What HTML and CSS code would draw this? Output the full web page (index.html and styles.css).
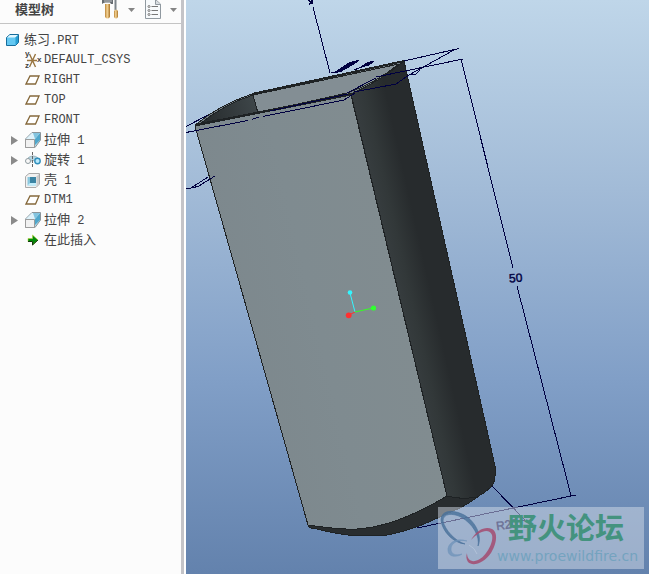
FILE: index.html
```html
<!DOCTYPE html>
<html lang="zh-CN">
<head>
<meta charset="utf-8">
<title>练习.PRT</title>
<link rel="stylesheet" href="styles.css">
</head>
<body>
<svg class="defs" aria-hidden="true">
  <defs>
    <linearGradient id="blue" x1="0" y1="0" x2="1" y2="1"><stop offset="0" stop-color="#d5eef9"/><stop offset="1" stop-color="#2f91bd"/></linearGradient>
    <linearGradient id="wood"><stop offset="0" stop-color="#b98336"/><stop offset=".45" stop-color="#f6d596"/><stop offset="1" stop-color="#a87228"/></linearGradient>
    <symbol id="part" viewBox="0 0 17 18">
      <path d="M1.500 6.500 5 3.500H13.500V11.500L10.500 14.500H1.500z" fill="#64c8f2" stroke="#176d9c"/>
      <path d="M2 6.500 5 4H13L10.500 6.500z" fill="#e1f7ff"/><path d="M10.500 6.500 13 4V11.500L10.500 14z" fill="#269ed2"/>
    </symbol>
    <symbol id="plane" viewBox="0 0 17 18"><path d="M5 5H14L10.500 13H1z" fill="#fff" stroke="#85683b" stroke-width="1.300"/></symbol>
    <symbol id="csys" viewBox="0 0 17 18">
      <path d="M4.500 3 10.500 16M10.500 3 4.500 16M2 9.500H12" fill="none" stroke="#987541" stroke-width="1.400"/>
      <g class="axis-name"><text x="0" y="5">y</text><text x="0" y="17">z</text><text x="12" y="11">x</text></g>
    </symbol>
    <symbol id="extrude" viewBox="0 0 17 18">
      <path d="M.5 8 7 1.500H15.500V9L10 16.500H.5z" fill="#b7deed" stroke="#8b959a"/>
      <path d="M7 2H15L10 8H1z" fill="#dff2fa"/><path d="M15 2V9L10 14V8z" fill="#4fa6ca"/><path d="M8 2H15L10 8z" fill="#83c4df"/>
      <path d="M.5 8.500H9.500V16.500H.5z" fill="#f1f1f1" stroke="#9c9c9c"/>
    </symbol>
    <symbol id="revolve" viewBox="0 0 17 18">
      <path d="M3 7Q5 5 8 5T13 7L10 10Q7 8 5 11z" fill="#b4d6e3" stroke="#9db4bf"/>
      <circle cx="3" cy="10" r="2.500" fill="#f8f8f8" stroke="#8f9ba0"/><circle cx="12.500" cy="10" r="2.700" fill="#b9e9fc" stroke="#318fbc" stroke-width="1.400"/>
      <path d="M7.500 1V17" stroke="#666" stroke-dasharray="3 1"/>
    </symbol>
    <symbol id="shell" viewBox="0 0 17 18">
      <path d="M.5 5.500 4 2.500H14.500V13L11 16.500H.5z" fill="#f1f1f1" stroke="#aaa"/><path d="M11.500 5.500 14 3V13L11.500 16z" fill="#ccc"/>
      <path d="M2.500 6H11V14.500H2.500z" fill="#8cc8de"/><path d="M5 6H11V12H5z" fill="#3b84a4"/><path d="M2.500 14.500 5 12H11V14.500z" fill="#c3edfb"/>
    </symbol>
    <symbol id="insert" viewBox="0 0 17 18"><path d="M3 7.500H7.500V4L13 9 7.500 14V10.500H3z" fill="#008b08" stroke="#b8d43c" stroke-width=".6"/><path d="M3 10.500H7.500V14L13 9" fill="none" stroke="#14380c"/></symbol>
    <symbol id="right" viewBox="0 0 8 9"><path d="M1 0 8 4.500 1 9z" fill="#8b8b8b"/></symbol>
    <symbol id="down" viewBox="0 0 7 4"><path d="M0 0H7L3.500 4z" fill="#858585"/></symbol>
  </defs>
</svg>

<div class="app">
  <aside class="panel">
    <header class="bar">
      <h1 class="title">模型树</h1>
      <div class="group">
        <button class="tool" type="button" aria-label="设置">
          <svg width="18" height="20" viewBox="0 0 18 20"><path d="M0 4V0H11V4H9L8 2.500H4Q2 2 0 4z" fill="#656b70"/><path d="M2 1H10" stroke="#bfc3c6"/><path d="M3 4H8V17Q5.500 20 3 17z" fill="url(#wood)"/><path d="M13.500 0V10" stroke="#7d858b" stroke-width="2"/><path d="M12 11Q14 8 16 11V17Q14 20 12 17z" fill="url(#wood)"/></svg>
        </button>
        <button class="tool" type="button" aria-label="设置菜单"><svg width="7" height="4"><use href="#down"/></svg></button>
      </div>
      <div class="group">
        <button class="tool" type="button" aria-label="显示">
          <svg width="17" height="20" viewBox="0 0 17 20"><path d="M.5 0V18.500H15.500V4L11 0" fill="#f7fafc" stroke="#9099a0"/><path d="M10.500 0V4.500H15.500" fill="#d8dee2" stroke="#9099a0"/><path d="M6.500 6.500H13M6.500 10.500H13M6.500 14.500H13" stroke="#777"/><g fill="#fff" stroke="#777"><circle cx="4" cy="6.500" r="1"/><circle cx="4" cy="10.500" r="1"/><circle cx="4" cy="14.500" r="1"/></g></svg>
        </button>
        <button class="tool" type="button" aria-label="显示菜单"><svg width="7" height="4"><use href="#down"/></svg></button>
      </div>
    </header>
    <ul class="tree">
      <li class="row root"><svg class="icon"><use href="#part"/></svg><span class="name"><span class="han">练习</span>.PRT</span></li>
      <li class="row"><span class="toggle"></span><svg class="icon"><use href="#csys"/></svg><span class="name">DEFAULT_CSYS</span></li>
      <li class="row"><span class="toggle"></span><svg class="icon"><use href="#plane"/></svg><span class="name">RIGHT</span></li>
      <li class="row"><span class="toggle"></span><svg class="icon"><use href="#plane"/></svg><span class="name">TOP</span></li>
      <li class="row"><span class="toggle"></span><svg class="icon"><use href="#plane"/></svg><span class="name">FRONT</span></li>
      <li class="row"><button class="toggle" type="button" aria-label="展开"><svg width="8" height="9"><use href="#right"/></svg></button><svg class="icon"><use href="#extrude"/></svg><span class="name"><span class="han">拉伸</span> 1</span></li>
      <li class="row"><button class="toggle" type="button" aria-label="展开"><svg width="8" height="9"><use href="#right"/></svg></button><svg class="icon"><use href="#revolve"/></svg><span class="name"><span class="han">旋转</span> 1</span></li>
      <li class="row"><span class="toggle"></span><svg class="icon"><use href="#shell"/></svg><span class="name"><span class="han">壳</span> 1</span></li>
      <li class="row"><span class="toggle"></span><svg class="icon"><use href="#plane"/></svg><span class="name">DTM1</span></li>
      <li class="row"><button class="toggle" type="button" aria-label="展开"><svg width="8" height="9"><use href="#right"/></svg></button><svg class="icon"><use href="#extrude"/></svg><span class="name"><span class="han">拉伸</span> 2</span></li>
      <li class="row"><span class="toggle"></span><svg class="icon"><use href="#insert"/></svg><span class="name"><span class="han">在此插入</span></span></li>
    </ul>
  </aside>

  <main class="view">
    <svg class="scene" viewBox="186 0 463 574" preserveAspectRatio="xMinYMin meet">
      <defs>
        <linearGradient id="front" gradientUnits="userSpaceOnUse" x1="230" y1="330" x2="400" y2="290"><stop offset="0" stop-color="#7d888d"/><stop offset=".5" stop-color="#7f8b90"/><stop offset="1" stop-color="#818c90"/></linearGradient>
        <linearGradient id="side" gradientUnits="userSpaceOnUse" x1="398" y1="290" x2="429" y2="283"><stop offset="0" stop-color="#363c3e"/><stop offset=".35" stop-color="#323839"/><stop offset="1" stop-color="#272b2d"/></linearGradient>
        <linearGradient id="inside" gradientUnits="userSpaceOnUse" x1="205" y1="120" x2="258" y2="103"><stop offset="0" stop-color="#272c2e"/><stop offset="1" stop-color="#3f474a"/></linearGradient>
      </defs>
      <!-- solid body -->
      <g stroke="#1e2224" stroke-linejoin="round" shape-rendering="crispEdges">
        <path d="M308 525 447 495 480 495C469 504 459 509 448 513C431 521 417 529 385 535.500H352C336 534 325 531 317 529Q309 529 308 525z" fill="#292d2f"/>
        <path d="M351 94 404 61 495 466C496 478 494 484 491 487Q485 493 477 497Q461 500 447 496z" fill="url(#side)"/>
        <path d="M195 126 351 95 447 496C422 511 390 527 357 529C340 530 323 527 308 525z" fill="url(#front)"/>
        <path d="M195 125Q221 104 252 94L404 61Q379 82 351 94z" fill="#737e83"/>
        <path d="M201 123Q225 104 253 95L258 113z" fill="url(#inside)"/>
        <path d="M253 95 399 64Q374 84 347 93L258 113z" fill="#838e94"/>
        <path d="M195 125 351 94M252 94 404 61" stroke-width="2"/>
      </g>
      <!-- sketch and dimension lines -->
      <g class="lines" shape-rendering="crispEdges">
        <path d="M313 7 330 73"/><path d="M308 0 312 3 309 4M312 0V3" stroke-width="1.500"/>
        <path d="M404 61 459 48.500M454 50 409 75 396 84 354 92M376 77 463 59M347 93 376 78M410 74H416L420 70"/>
        <path d="M186 126.500 208 115M186 132.500 248 120.500M252 119.500 259 117M263 116.500 344 100 355 93M270 111 348 94"/>
        <path d="M186 189 191 188 208 177M186 189 198 186.500 215 176"/>
        <path d="M334 73 349 63 359 60 354 64 341 71zM361 67 367 63 374 61 369 65z" fill="#000040"/>
        <path d="M331 73 342 71M354 70 364 66"/>
        <path d="M461 59 513 268M517 286 571 495.500M417 528 576 495M492 486 525 520 513 522"/>
      </g>
      <text class="dimension" x="509" y="282" transform="rotate(-4 515 278)">50</text>
      <text class="dimension" x="496" y="529" transform="rotate(-8 505 525)">R20</text>
      <!-- spin centre -->
      <g fill="none"><path d="M355 312 350 293" stroke="#33f6ff"/><path d="M355 312 373 308" stroke="#33ff22"/><path d="M355 312 349 315" stroke="#ff3030"/></g>
      <circle cx="350" cy="292.500" r="2.300" fill="#33f6ff"/><circle cx="373.500" cy="308" r="2.600" fill="#30ff30"/><circle cx="348.700" cy="315.300" r="2.900" fill="#ff3030"/>
      <!-- forum badge -->
      <path d="M438 507H644V569H438z" fill="#d3dbe8" fill-opacity=".5"/>
      <g fill-rule="evenodd">
        <path d="M478 546C483 535 474 519 462 514C451 509 441 511 441 520C442 531 453 543 465 544C455 541 445 530 443 521C443 513 453 513 461 517C473 524 480 536 478 546z" fill="#48709a" fill-opacity=".8" stroke="#48709a" stroke-opacity=".6"/>
        <path d="M467 541C455 537 447 544 448 551C449 558 458 557 462 554C455 556 451 554 451 549C451 543 458 539 467 541z" fill="#6f93b9" fill-opacity=".75" stroke="#6f93b9" stroke-opacity=".5"/>
        <path d="M471 540C477 529 486 526 492 529C499 533 496 545 491 553C484 563 473 567 468 562C466 559 466 556 467 553C467 560 472 563 478 560C486 557 494 542 492 535C489 527 478 532 471 540z" fill="#a34b70" fill-opacity=".85"/>
        <path d="M469 545Q475 548 477 554" fill="none" stroke="#b2c2d8"/>
      </g>
      <text class="forum" x="508" y="539">野火论坛</text>
      <text class="site" x="497" y="561">www.proewildfire.cn</text>
    </svg>
  </main>
</div>
</body>
</html>
```
FILE: styles.css
```css
* { box-sizing: border-box; }

body {
  margin: 0;
  font-family: "Liberation Mono", "Noto Sans CJK SC", monospace;
  font-size: 12px;
  color: #444;
}

.defs { position: absolute; width: 0; height: 0; }

.app {
  display: grid;
  grid-template-columns: 186px 1fr;
  min-height: 100vh;
}

.panel {
  background: #fcfcfc;
  border-right: 2px solid #fff;
  box-shadow: inset -3px 0 #c4c4c8;
  padding-right: 3px;
}

.bar {
  display: flex;
  align-items: flex-start;
  gap: 10px;
  height: 24px;
  padding: 0 4px 0 15px;
  border-bottom: 1px solid #c4c4c4;
}

.title {
  margin: 0 auto 0 0;
  font-family: "Noto Sans CJK SC", sans-serif;
  font-size: 13px;
  font-weight: 700;
  line-height: 18px;
}

.group { display: flex; align-items: center; gap: 8px; height: 20px; }

.tool, .toggle {
  padding: 0;
  border: 0;
  background: none;
  font: inherit;
}

.tool svg { display: block; }

.tree { margin: 0; padding: 6px 0 0; list-style: none; }

.row {
  display: flex;
  align-items: center;
  height: 20px;
  padding-left: 10px;
}

.root { padding-left: 5px; }

.toggle { display: flex; align-items: center; width: 15px; height: 20px; }

.icon { width: 17px; height: 18px; margin-right: 2px; }

.name { line-height: 20px; white-space: pre; }

.han { font-family: "Noto Sans CJK SC", sans-serif; font-size: 13px; }

.axis-name { font: 700 8px "Liberation Sans", sans-serif; fill: #444; }

.view { background: linear-gradient(#bfd6e9, #a2bbd7 33%, #819fc7 66%, #6382ad); }

.scene { display: block; width: 100%; height: auto; }

.lines { fill: none; stroke: #000040; }

.dimension { font: 12px "Liberation Sans", sans-serif; fill: #000040; stroke: #000040; stroke-width: .4px; }

.forum { font: 700 29px "Noto Sans CJK SC", sans-serif; fill: #44937f; }

.site { font: 14px "DejaVu Sans", sans-serif; fill: #74a3bf; }
```
